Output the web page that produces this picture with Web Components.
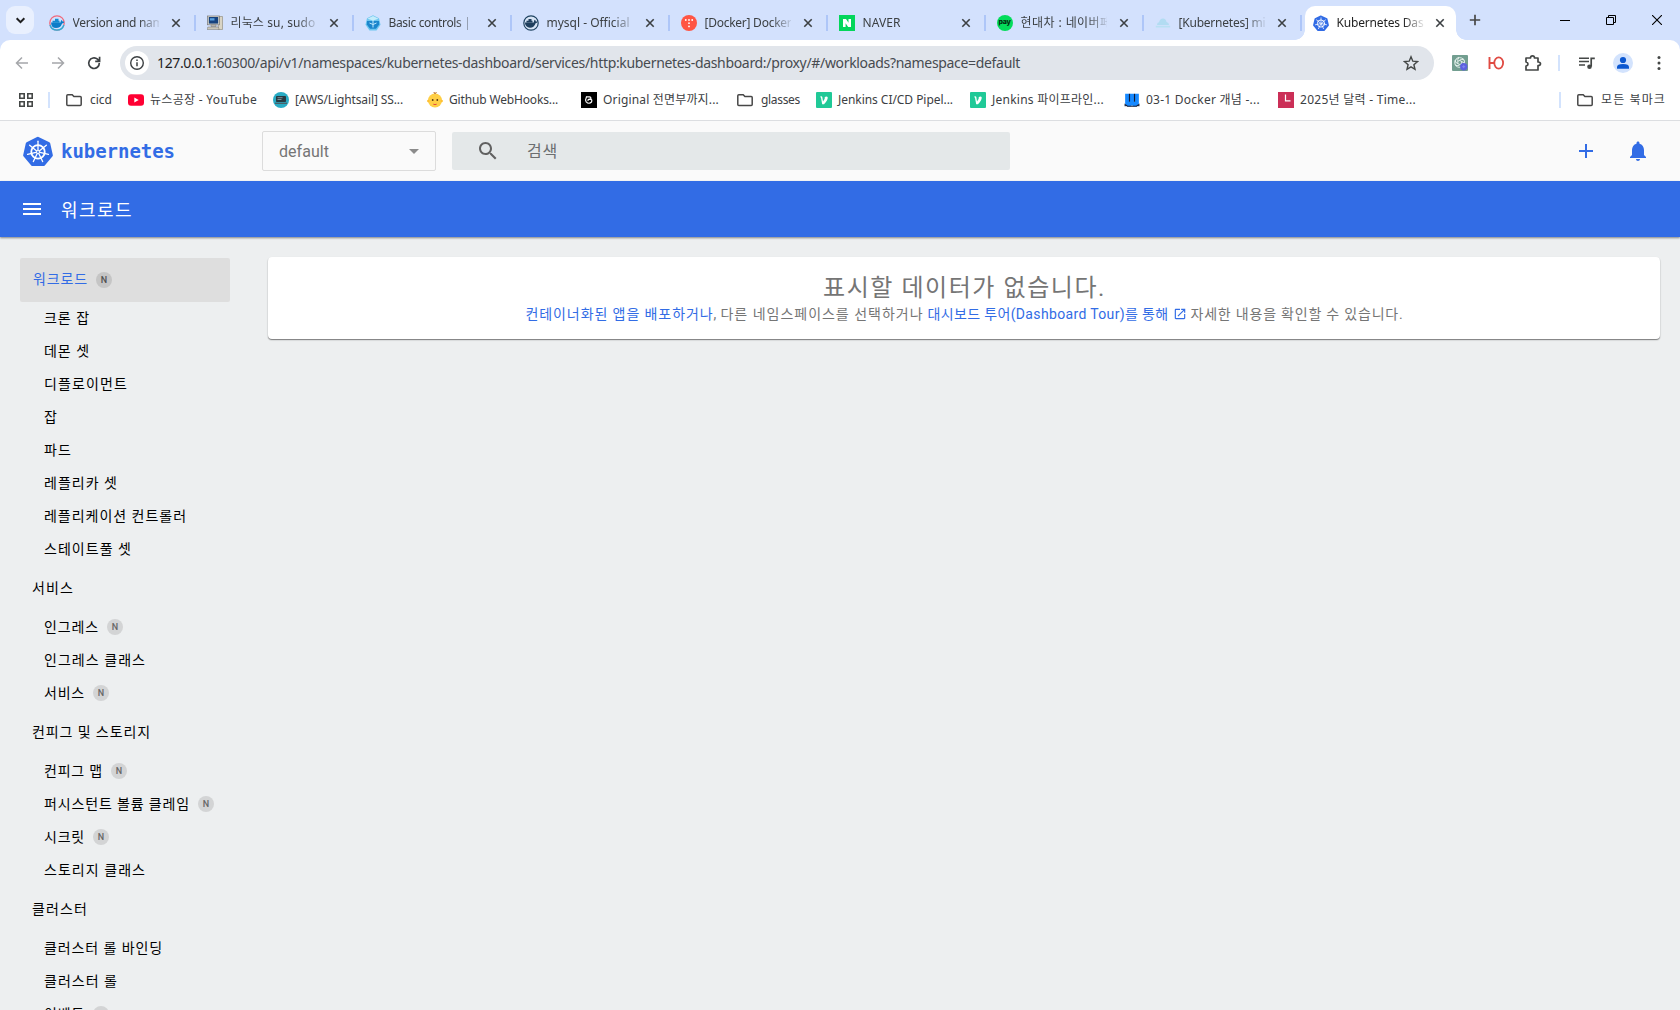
<!DOCTYPE html>
<html lang="ko">
<head>
<meta charset="utf-8">
<title>Kubernetes Dashboard</title>
<style>
html,body{margin:0;height:100%;overflow:hidden;background:#edeff0}
body{font-family:"Noto Sans","Noto Sans CJK KR",sans-serif}
</style>
</head>
<body>
<app-window></app-window>
<script>
const KUBE = `<path fill="#326ce5" d="M16 .8 28.1 6.6Q28.8 7 29 7.8L31.8 20.2Q32 21 31.5 21.6L23.2 31.4Q22.6 32 21.8 32H10.2Q9.4 32 8.8 31.4L.5 21.6Q0 21 .2 20.2L3 7.8Q3.2 7 3.9 6.6L15 1Q16 .5 17 1Z"/>
<g fill="none" stroke="#fff" stroke-linecap="round"><circle cx="16" cy="17" r="7.2" stroke-width="1.9"/><circle cx="16" cy="17" r="1.6" stroke-width="1.2"/>
<g stroke-width="1.4">${[0,1,2,3,4,5,6].map(i=>`<path d="M16 14.8V5.6" transform="rotate(${i*360/7} 16 17)"/>`).join('')}</g></g>`;
const V = '<rect width="16" height="16" rx="1" fill="#20c997"/><path d="M4 4.800q1.800-1 2.300.2l.7 4.500q2.300-2.500 1.800-4.500 2.200-1 2.900.2Q12 8 8 12.300H6.200L5 5.800Z" fill="#fff"/>';
const ICONS = {
 docker:['16','<circle cx="8" cy="8" r="7.200" fill="#cfe2ff" stroke="#f06a7c" stroke-width="1.300"/><path d="M1 10A7.200 7.200 0 0 0 14.800 10" fill="none" stroke="#2ab0d8" stroke-width="1.400"/><path d="M2 7.500h9.500q.2-2 1-2.600 1 .8 1 1.700 1-.2 1.900.2-.5 1.600-2.300 1.600Q11.500 13 7 13 2.300 13 2 7.500Z" fill="#0b7dc8"/><path d="M3.500 6.700h7M6 4.800h3.500" stroke="#138bd0" stroke-width="1.900"/>'],
 pc:['16','<path d="M12 1.500h3.500v13H11Z" fill="#d9d4c4" stroke="#8b8675" stroke-width=".6"/><rect x=".6" y="1" width="11.800" height="8.800" fill="#dcd9cc" stroke="#777" stroke-width=".7"/><rect x="1.800" y="2" width="9.400" height="6.600" fill="#17437f"/><path d="M3 3.200h4.500v2.300H3Z" fill="#5aa0e0"/><path d="M4 10h5v1.500H4ZM.8 12h10.500l1 2.500H0Z" fill="#c9c6b9" stroke="#777" stroke-width=".5"/>'],
 minikube:['16','<path d="m8 .3 6 3 1.500 6.500L11.500 15.500h-7L.5 9.800 2 3.300Z" fill="#6cc6ef"/><path d="m8 1 5.600 2.700L8 5.500 2.400 3.700Z" fill="#c4edfb"/><path d="M2 6h12l.2 3.500L11 13.800H5L1.800 9.500Z" fill="#1b86cc"/><path d="M8 5v7.500M4.500 8 8 9.500 11.500 8" stroke="#bfeaff" fill="none"/>'],
 mysql:['16','<circle cx="8" cy="8" r="7.200" fill="#d7e4f5" stroke="#1f4361" stroke-width="1.200"/><path d="M1.800 7.500h9q0-2 1-2.800 1 .7 1 1.800 1-.2 1.800.1-.5 1.500-2 1.600Q11 12.800 7 12.800 2.500 12.500 1.800 7.500Z" fill="#1f3f5d"/><path d="M3.500 6.700h6M5.500 4.900h3" stroke="#1f3f5d" stroke-width="1.700"/>'],
 tistory:['16','<circle cx="8" cy="8" r="8" fill="#ff5544"/><g fill="#fff"><circle cx="4.800" cy="5" r=".9"/><circle cx="8" cy="5" r=".9"/><circle cx="11.200" cy="5" r=".9"/><circle cx="8" cy="8.200" r=".9"/><circle cx="8" cy="11.400" r=".9"/></g>'],
 naver:['16','<path fill="#03d65b" d="M0 0h16v16H0Z"/><path fill="#fff" d="M4 4h3l2.500 3.800V4H12v8H9.200L6.600 8.200V12H4Z"/>'],
 cloud:['16','<path d="M2 10q0-2.500 2-2.700Q4.800 3.500 8 3.500q3 0 3.500 3.500 2.500.3 2.500 3Z" fill="#b2dcf2"/><path d="M.8 10.800h14.400v1.700H.8Z" fill="#b9e0f3"/>'],
 kube:['32',KUBE],
 yt:['16','<rect y="2.200" width="16" height="11.600" rx="3" fill="#f03"/><path d="m6.300 5.500 4.400 2.500-4.400 2.500Z" fill="#fff"/>'],
 aws:['16','<circle cx="8" cy="8" r="8" fill="#28abc4"/><rect x="3" y="4" width="10" height="6" rx=".8" fill="#263a42"/><path d="M4.500 5.700h5M4.500 7.500h4" stroke="#7d9299"/><path d="M2 11.300h12" stroke="#4a5d66" stroke-width="1.300"/>'],
 baby:['16','<circle cx="8" cy="8.500" r="7" fill="#ffcf45"/><circle cx="1.300" cy="9" r="1.200" fill="#ffbf32"/><circle cx="14.700" cy="9" r="1.200" fill="#ffbf32"/><path d="M8 1.500q-2-.5-.5-1.500M8 1.500Q10 1 9 .2" stroke="#bc6e20" fill="none"/><circle cx="5.700" cy="8" r=".9" fill="#5b3714"/><circle cx="10.300" cy="8" r=".9" fill="#5b3714"/><path d="M6.500 11.400q1.500 1 3 0v1.500h-3Z" fill="#e34a40"/>'],
 orig:['16','<path d="M0 0h16v16H0Z"/><path d="M5 4.800h3.500q1.800.2 1.300 2.500M5.500 4.800q-1.500 3.200-.3 5 2.800 2.800 5.300.2 1.200-2.700-1.800-2.900-2.300.2-1.500 2" fill="none" stroke="#fff" stroke-width="1.200"/>'],
 vel:['16',V],
 wiki:['14','<path d="M1 1.500h3.500v7H5v-7h4v7h.5v-7H13v9l-2 2H8l-1-1-1 1H3l-2-2Z" fill="#1689ff"/><path d="M1 12.500V11l2 1.500h8l2-1.500v1.500M4.800 1.500v7M9.200 1.500v7" fill="none" stroke="#101c38" stroke-width="1"/>'],
 cal:['16','<path d="M0 0h16v16H0Z" fill="#cb2f57"/><path d="M7.500 2.500v6.300h5" fill="none" stroke="#fff" stroke-width="1.200"/>'],
 folder:['16','<path d="M.8 3.800q0-1 1-1h4.400l1.700 1.800h6.300q1 0 1 1v7q0 1-1 1H1.800q-1 0-1-1Z" fill="none" stroke="#474747" stroke-width="1.500"/>'],
 apps:['16','<path d="M1.800 1.800h4.400v4.400H1.800ZM9.800 1.800h4.400v4.400H9.800ZM1.800 9.800h4.400v4.400H1.800ZM9.800 9.800h4.400v4.400H9.800Z" fill="none" stroke="#444746" stroke-width="1.600"/>'],
 x:['10','<path d="m1.300 1.300 7.400 7.400M8.700 1.300 1.300 8.700" stroke="#3c4043" stroke-width="1.600"/>'],
 chev:['10','<path d="m1.500 3 3.500 3.500L8.500 3" fill="none" stroke="#1f1f1f" stroke-width="1.800"/>'],
 back:['14','<path d="M13 7H2M7 1.500 1.500 7 7 12.500" fill="none" stroke="#a5a7aa" stroke-width="1.500"/>'],
 fwd:['14','<path d="M1 7h11M7 1.500 12.500 7 7 12.500" fill="none" stroke="#a5a7aa" stroke-width="1.500"/>'],
 reload:['14','<path d="M12.300 7A5.300 5.300 0 1 1 10.500 3.200L12.300 5M12.600 .8V5.300H8.200" fill="none" stroke="#3c4043" stroke-width="1.700"/>'],
 info:['16','<circle cx="8" cy="8" r="6.300" fill="none" stroke="#3c4043" stroke-width="1.400"/><path d="M8 7.300v4M8 4.600v1.500" stroke="#3c4043" stroke-width="1.500"/>'],
 star:['16','<path d="m8 1.800 1.800 4.400 4.700.4-3.600 3.100 1.100 4.600L8 11.800l-4 2.500 1.100-4.600L1.500 6.600l4.700-.4Z" fill="none" stroke="#444746" stroke-width="1.400"/>'],
 gpt:['16',`<rect width="16" height="16" rx="1" fill="#729e90"/><g fill="none" stroke="#e5f1ec" stroke-width=".9">${[0,1,2,3,4,5].map(i=>`<path d="M5.800 8.600V4.200Q7.300 1.700 9.700 3L12 4.500" transform="rotate(${i*60} 7.700 7.500)"/>`).join('')}</g><circle cx="11.700" cy="11.700" r="3.700" fill="#5c62df"/><path d="M10.200 11.700h3M11.700 10.200v3" stroke="#8188ef"/>`],
 yu:['16','<path d="M1.500 2v12M1.500 8H6" stroke="#e04b43" stroke-width="1.900"/><ellipse cx="10.700" cy="8" rx="4.400" ry="5.600" fill="none" stroke="#e04b43" stroke-width="1.800"/>'],
 ext:['18','<path d="M2 4h4.500q0-2.200 2-2.200T10.500 4H14v4q2.500 0 2.500 1.700T14 11.500V16H2v-4q2-.3 2-2T2 8Z" fill="none" stroke="#444746" stroke-width="1.700" stroke-linejoin="round"/>'],
 media:['16','<path d="M0 3.200h10M0 6.600h10M0 10h6" stroke="#444746" stroke-width="1.500"/><path d="M12.200 11.500V3.300H15.800" fill="none" stroke="#444746" stroke-width="1.700"/><circle cx="10.500" cy="11.700" r="2.300" fill="#444746"/>'],
 user:['20','<circle cx="10" cy="10" r="10" fill="#d3e3fd"/><circle cx="10" cy="7" r="3.100" fill="#0b57d0"/><path d="M4 15.800V14q0-3 6-3t6 3v1.800Z" fill="#0b57d0"/>'],
 dots:['16','<g fill="#444746"><circle cx="8" cy="2.500" r="1.500"/><circle cx="8" cy="8" r="1.500"/><circle cx="8" cy="13.500" r="1.500"/></g>'],
 plus:['12','<path d="M6 .8v10.400M.8 6h10.400" stroke="#474747" stroke-width="1.700"/>'],
 min:['10','<path d="M0 5.500h10" stroke="#000"/>'],
 max:['10','<path d="M.5 2.500h7v7h-7ZM2.500 2.500v-2h7v7h-2" fill="none" stroke="#000"/>'],
 close:['10','<path d="m0 0 10 10M10 0 0 10" stroke="#000" stroke-width="1.100"/>'],
 search:['24','<path fill="#616161" d="M15.500 14h-.79l-.28-.27C15.410 12.590 16 11.110 16 9.500 16 5.910 13.090 3 9.500 3S3 5.910 3 9.500 5.910 16 9.500 16c1.610 0 3.090-.59 4.230-1.570l.27.28v.79l5 4.990L20.490 19l-4.990-5zm-6 0C7.010 14 5 11.990 5 9.500S7.010 5 9.500 5 14 7.010 14 9.500 11.990 14 9.500 14z"/>'],
 add:['24','<path fill="#326ce5" d="M19 13h-6v6h-2v-6H5v-2h6V5h2v6h6v2z"/>'],
 bell:['24','<path fill="#326ce5" d="M12 22c1.100 0 2-.9 2-2h-4c0 1.100.89 2 2 2zm6-6v-5c0-3.070-1.640-5.640-4.500-6.320V4c0-.83-.67-1.500-1.500-1.500s-1.500.67-1.500 1.500v.68C7.630 5.360 6 7.920 6 11v5l-2 2v1h16v-1l-2-2z"/>'],
 menu:['24','<path fill="#fff" d="M3 18h18v-2H3v2zm0-5h18v-2H3v2zm0-7v2h18V6H3z"/>'],
 open:['24','<path fill="#326ce5" d="M19 19H5V5h7V3H5c-1.110 0-2 .9-2 2v14c0 1.100.89 2 2 2h14c1.100 0 2-.9 2-2v-7h-2v7zM14 3v2h3.590l-9.830 9.830 1.410 1.410L19 6.410V10h2V3h-7z"/>'],
 drop:['10','<path d="M0 3h10l-5 5Z" fill="#8b8b8b"/>']
};
const define = (name, html, setup) => customElements.define(name, class extends HTMLElement {
  connectedCallback(){
    if (this.shadowRoot) return;
    this.attachShadow({mode:'open'}).innerHTML = typeof html === 'function' ? html(this) : html;
    if (setup) setup(this);
  }
});

define('ui-icon', el => {
  const n = el.getAttribute('name'), s = el.getAttribute('size') || 16;
  const pay = n === 'pay';
  const [vb, body] = pay ? ['16',''] : ICONS[n];
  return `<style>:host{display:block;flex:none;width:${s}px;height:${s}px}svg{display:block;width:100%;height:100%}
  b{display:flex;height:16px;border-radius:50%;background:#03dc5a;color:#022b12;font:800 7px/14px Inter,sans-serif;justify-content:center;letter-spacing:-.2px}</style>`
  + (pay ? '<b>pay</b>' : `<svg viewBox="0 0 ${vb} ${vb}">${body}</svg>`);
});

define('browser-tab', el => `<style>
:host{display:flex;align-items:center;box-sizing:border-box;width:158px;height:34px;flex:none;padding-left:11px;color:#3c4043;font-size:12px}
.t{width:88px;margin-left:8px;overflow:hidden;white-space:nowrap;line-height:20px;-webkit-mask-image:linear-gradient(90deg,#000 66px,transparent 89px)}
ui-icon{margin-bottom:1px}
.x{margin-left:12px}.s{width:2px;height:16px;background:#aec6f8;margin-left:13px}
:host([active]){width:151px;background:#fff;border-radius:10px 10px 0 0;padding-left:8px;color:#1f1f1f}
:host([active]) .s{display:none}
:host([active]) .x{margin-left:10px}
</style><ui-icon name="${el.getAttribute('icon')}"></ui-icon><div class="t"><fit-text w="${el.getAttribute('w')}"><slot></slot></fit-text></div><ui-icon class="x" name="x" size="10"></ui-icon><div class="s"></div>`);

define('tab-strip', `<style>
:host{display:flex;height:40px;background:#d3e1fd;align-items:center}
.c{width:28px;height:28px;border-radius:9px;background:#e9f0fe;display:grid;place-items:center;margin-left:6px;flex:none}
.tabs{display:flex;align-self:flex-end;margin-left:3.500px}
.act{display:flex;align-items:flex-end}
.l,.r{width:10px;height:10px;background:radial-gradient(circle at 0 0,transparent 9.500px,#fff 10px)}
.r{background:radial-gradient(circle at 100% 0,transparent 9.500px,#fff 10px)}
.l{margin-left:-7px}.new{margin-left:3.500px}.wc{display:flex;gap:36px;margin-left:auto;margin-right:18px}
</style><div class="c"><ui-icon name="chev" size="11"></ui-icon></div>
<div class="tabs">
<browser-tab icon="docker" w="91">Version and nam</browser-tab><browser-tab icon="pc" w="85">리눅스 su, sudo</browser-tab>
<browser-tab icon="minikube" w="82">Basic controls |</browser-tab><browser-tab icon="mysql" w="83">mysql - Official</browser-tab>
<browser-tab icon="tistory" w="87">[Docker] Docker</browser-tab><browser-tab icon="naver" w="38">NAVER</browser-tab>
<browser-tab icon="pay" w="91">현대차 : 네이버페</browser-tab><browser-tab icon="cloud" w="87">[Kubernetes] mi</browser-tab>
<div class="act"><div class="l"></div><browser-tab active icon="kube" w="87">Kubernetes Das</browser-tab><div class="r"></div></div></div>
<ui-icon class="new" name="plus" size="12"></ui-icon>
<div class="wc"><ui-icon name="min" size="10"></ui-icon><ui-icon name="max" size="10"></ui-icon><ui-icon name="close" size="10"></ui-icon></div>`);

define('address-bar', `<style>
:host{display:block;background:#d3e1fd}
.b{display:flex;align-items:center;height:46px;background:#fff;border-radius:10px 10px 0 0;padding:0 14px 0 15px}
.nav{display:flex;gap:22px;margin-right:19px}
.o{box-sizing:border-box;flex:none;width:1314px;height:34px;border-radius:17px;background:#e1e5eb;display:flex;align-items:center;padding:0 15px 0 5px;font-size:14px;color:#474b50}
.i{width:24px;height:24px;border-radius:50%;background:#fff;display:grid;place-items:center;margin-right:8px}
.o b{font-weight:400;color:#1f1f1f}.star{margin-left:auto}.o fit-text{margin-bottom:1px}
.e{display:flex;align-items:center;margin-left:18px}.sep{width:2px;height:16px;background:#d3e3fd}
</style><div class="b"><div class="nav"><ui-icon name="back" size="14"></ui-icon><ui-icon name="fwd" size="14"></ui-icon><ui-icon name="reload" size="14"></ui-icon></div>
<div class="o"><div class="i"><ui-icon name="info" size="16"></ui-icon></div><b><fit-text w="56">127.0.0.1</fit-text></b><fit-text w="807">:60300/api/v1/namespaces/kubernetes-dashboard/services/http:kubernetes-dashboard:/proxy/#/workloads?namespace=default</fit-text><ui-icon class="star" name="star"></ui-icon></div>
<div class="e"><ui-icon name="gpt"></ui-icon><ui-icon name="yu" style="margin-left:20px"></ui-icon><ui-icon name="ext" size="18" style="margin-left:20px"></ui-icon><div class="sep" style="margin-left:16px"></div><ui-icon name="media" style="margin-left:19px"></ui-icon><ui-icon name="user" size="20" style="margin-left:18px"></ui-icon><ui-icon name="dots" style="margin-left:18px"></ui-icon></div></div>`);

define('book-mark', el => `<style>:host{display:flex;align-items:center;font-size:12px;color:#3c4043;margin-left:${el.getAttribute('gap')}px;line-height:20px}
fit-text{margin-left:${el.getAttribute('pad')||6}px;margin-bottom:1px}</style><ui-icon name="${el.getAttribute('icon')}"></ui-icon><fit-text w="${el.getAttribute('w')}"><slot></slot></fit-text>`);

define('bookmark-bar', `<style>
:host{display:flex;align-items:center;box-sizing:border-box;height:35px;padding:0 14px 6px 18px;background:#fff;border-bottom:1px solid #dcdee1}
.sep{width:2px;height:16px;background:#d3e3fd;margin-left:14px}.end{margin-left:auto;display:flex;align-items:center}
</style><ui-icon name="apps"></ui-icon><div class="sep"></div>
<book-mark icon="folder" gap="16" pad="8" w="22">cicd</book-mark><book-mark icon="yt" gap="16" w="107">뉴스공장 - YouTube</book-mark>
<book-mark icon="aws" gap="16" w="108">[AWS/Lightsail] SS...</book-mark><book-mark icon="baby" gap="24" w="109">Github WebHooks...</book-mark>
<book-mark icon="orig" gap="23" w="116">Original 전면부까지...</book-mark><book-mark icon="folder" gap="18" pad="8" w="39">glasses</book-mark>
<book-mark icon="vel" gap="16" w="115">Jenkins CI/CD Pipel...</book-mark><book-mark icon="vel" gap="17" w="112">Jenkins 파이프라인...</book-mark>
<book-mark icon="wiki" gap="20" w="114">03-1 Docker 개념 -...</book-mark><book-mark icon="cal" gap="18" w="116">2025년 달력 - Time...</book-mark>
<div class="end"><div class="sep"></div><book-mark icon="folder" gap="16" pad="8" w="65">모든 북마크</book-mark></div>`);

define('kube-header', `<style>
:host{display:flex;align-items:center;height:60px;background:#fafafa;font:16px Roboto,"Noto Sans CJK KR",sans-serif}
.logo{font:bold 19px "DejaVu Sans Mono",monospace;color:#326ce5;margin-left:8px;width:201px}
.sel{box-sizing:border-box;width:174px;height:40px;border:1px solid #dcdcdc;border-radius:2px;display:flex;align-items:center;justify-content:space-between;padding:0 16px;color:#757575}
.q{box-sizing:border-box;width:558px;height:38px;background:#e4e8e9;border-radius:2px;margin-left:16px;padding-left:24px;display:flex;align-items:center;color:#6b6e70}
.q fit-text{margin-left:27px;margin-bottom:2px}.a{display:flex;gap:28px;margin-left:auto;margin-right:30px}
</style><ui-icon name="kube" size="30" style="margin-left:23px"></ui-icon><div class="logo"><fit-text w="114">kubernetes</fit-text></div>
<div class="sel"><fit-text w="50">default</fit-text><ui-icon name="drop" size="10"></ui-icon></div>
<div class="q"><ui-icon name="search" size="24"></ui-icon><fit-text w="31">검색</fit-text></div>
<div class="a"><ui-icon name="add" size="24"></ui-icon><ui-icon name="bell" size="24"></ui-icon></div>`);

define('page-bar', `<style>
:host{display:flex;position:relative;align-items:center;height:56px;background:#326ce5;color:#fff;padding-left:20px;font:18px Roboto,"Noto Sans CJK KR",sans-serif;box-shadow:0 1px 2px rgba(0,0,0,.45)}
fit-text{margin-left:17px}</style><ui-icon name="menu" size="24"></ui-icon><fit-text w="72"><slot></slot></fit-text>`);

define('nav-item', el => `<style>
:host{display:flex;align-items:center;box-sizing:border-box;height:33px;padding:0 0 1px 24px;font:14px/20px Roboto,"Noto Sans CJK KR",sans-serif;color:#000;flex:none}
:host([group]){height:45px;padding-left:12px}
:host([selected]){height:44px;padding-left:13px;background:#dedede;color:#326ce5;border-radius:2px}
fit-text{margin-bottom:1px}
i{width:16px;height:16px;border-radius:50%;background:#d3d4d5;color:#666;font:500 9px/17px Roboto,sans-serif;text-align:center;margin-left:8px}
:host([selected]) i{background:#c5c5c5;color:#505050}
</style><fit-text w="${el.getAttribute('w')}"><slot></slot></fit-text>${el.hasAttribute('n') ? '<i>N</i>' : ''}`);

define('side-nav', `<style>:host{display:flex;flex-direction:column;width:210px;padding:21px 0 0 20px;flex:none}</style>
<nav-item group selected n w="55">워크로드</nav-item>
<nav-item w="46">크론 잡</nav-item><nav-item w="46">데몬 셋</nav-item><nav-item w="84">디플로이먼트</nav-item><nav-item w="14">잡</nav-item><nav-item w="28">파드</nav-item><nav-item w="74">레플리카 셋</nav-item><nav-item w="143">레플리케이션 컨트롤러</nav-item><nav-item w="88">스테이트풀 셋</nav-item>
<nav-item group w="42">서비스</nav-item><nav-item n w="55">인그레스</nav-item><nav-item w="102">인그레스 클래스</nav-item><nav-item n w="41">서비스</nav-item>
<nav-item group w="119">컨피그 및 스토리지</nav-item><nav-item n w="59">컨피그 맵</nav-item><nav-item n w="146">퍼시스턴트 볼륨 클레임</nav-item><nav-item n w="41">시크릿</nav-item><nav-item w="102">스토리지 클래스</nav-item>
<nav-item group w="56">클러스터</nav-item><nav-item w="119">클러스터 롤 바인딩</nav-item><nav-item w="74">클러스터 롤</nav-item><nav-item n w="41">이벤트</nav-item>`);

define('empty-card', `<style>
:host{display:flex;flex-direction:column;align-items:center;box-sizing:border-box;width:1392px;height:82px;margin:20px 0 0 38px;background:#fff;border-radius:4px;box-shadow:0 1px 1px rgba(0,0,0,.4),0 1px 2px rgba(0,0,0,.15);color:#757575;font:14px/20px Roboto,"Noto Sans CJK KR",sans-serif;padding:15px 0 0 1px}
.h{font-size:24px;line-height:32px}.p{display:flex;align-items:center}.k{color:#326ce5}
</style><div class="h"><fit-text w="283">표시할 데이터가 없습니다.</fit-text></div>
<div class="p"><fit-text class="k" w="188">컨테이너화된 앱을 배포하거나</fit-text><fit-text w="3">,</fit-text><fit-text w="203" style="margin-left:4px">다른 네임스페이스를 선택하거나</fit-text><fit-text class="k" w="241" style="margin-left:4px">대시보드 투어(Dashboard Tour)를 통해</fit-text><ui-icon name="open" size="14" style="margin:0 4px"></ui-icon><fit-text w="213">자세한 내용을 확인할 수 있습니다.</fit-text></div>`);

define('app-window', `<style>:host{display:flex;flex-direction:column;width:1680px;height:1010px;overflow:hidden;background:#edeff0}
.m{display:flex;flex:1;min-height:0;overflow:hidden}</style>
<tab-strip></tab-strip><address-bar></address-bar><bookmark-bar></bookmark-bar><kube-header></kube-header><page-bar>워크로드</page-bar>
<div class="m"><side-nav></side-nav><empty-card></empty-card></div>`);

/* Label whose tracking is adjusted so the run is exactly "w" pixels wide. */
define('fit-text', '<style>:host{display:inline-block;white-space:nowrap;flex:none}</style><slot></slot>', el => {
  const text = el.shadowRoot.querySelector('slot').assignedNodes({flatten:true}).map(n => n.textContent).join('');
  const w = +el.getAttribute('w'), natural = el.getBoundingClientRect().width;
  el.style.letterSpacing = ((w - natural) / [...text].length) + 'px';
});
</script>
</body>
</html>
